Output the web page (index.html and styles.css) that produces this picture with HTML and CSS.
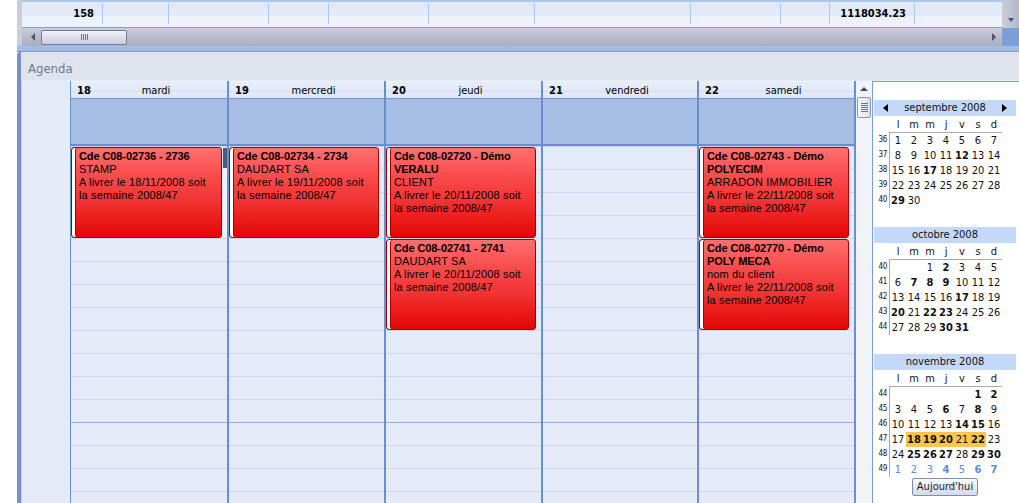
FILE: index.html
```html
<!DOCTYPE html>
<html lang="fr">
<head>
    <meta charset="UTF-8">
    <title>Agenda</title>
    <link rel="stylesheet" href="styles.css">
</head>
<body>
<div class="window">
    <!-- grille des commandes : ligne de totaux + barres de défilement -->
    <div class="grid-pane">
        <div class="grid-main">
            <div class="total-row">
                <div class="cell">158</div>
                <div class="cell"></div>
                <div class="cell"></div>
                <div class="cell"></div>
                <div class="cell"></div>
                <div class="cell"></div>
                <div class="cell"></div>
                <div class="cell"></div>
                <div class="cell"></div>
                <div class="cell">1118034.23</div>
                <div class="cell"></div>
            </div>
            <div class="hscroll">
                <span class="arr-left"></span>
                <div class="hthumb"><span class="hgrip"></span></div>
                <span class="arr-right"></span>
            </div>
        </div>
        <div class="grid-side">
            <div class="vtop"><span class="arr-down"></span></div>
            <div class="corner"></div>
        </div>
    </div>
    <div class="splitter"></div>

    <!-- agenda de la semaine -->
    <div class="agenda">
        <div class="agenda-title">Agenda</div>
        <div class="agenda-body">
            <div class="ruler"></div>
            <div class="days">
                <div class="day">
                    <div class="day-head"><b>18</b><span>mardi</span></div>
                    <div class="all-day"></div>
                    <div class="slots">
                        <div class="event r1">
                            <b>Cde C08-02736 - 2736</b>
                            <div>STAMP</div>
                            <div>A livrer le 18/11/2008 soit</div>
                            <div>la semaine 2008/47</div>
                        </div>
                        <div class="sel-bar"></div>
                    </div>
                </div>
                <div class="day">
                    <div class="day-head"><b>19</b><span>mercredi</span></div>
                    <div class="all-day"></div>
                    <div class="slots">
                        <div class="event r1">
                            <b>Cde C08-02734 - 2734</b>
                            <div>DAUDART SA</div>
                            <div>A livrer le 19/11/2008 soit</div>
                            <div>la semaine 2008/47</div>
                        </div>
                    </div>
                </div>
                <div class="day">
                    <div class="day-head"><b>20</b><span>jeudi</span></div>
                    <div class="all-day"></div>
                    <div class="slots">
                        <div class="event r1">
                            <b>Cde C08-02720 - Démo</b>
                            <b>VERALU</b>
                            <div>CLIENT</div>
                            <div>A livrer le 20/11/2008 soit</div>
                            <div>la semaine 2008/47</div>
                        </div>
                        <div class="event r5">
                            <b>Cde C08-02741 - 2741</b>
                            <div>DAUDART SA</div>
                            <div>A livrer le 20/11/2008 soit</div>
                            <div>la semaine 2008/47</div>
                        </div>
                    </div>
                </div>
                <div class="day">
                    <div class="day-head"><b>21</b><span>vendredi</span></div>
                    <div class="all-day"></div>
                    <div class="slots"></div>
                </div>
                <div class="day">
                    <div class="day-head"><b>22</b><span>samedi</span></div>
                    <div class="all-day"></div>
                    <div class="slots">
                        <div class="event r1">
                            <b>Cde C08-02743 - Démo</b>
                            <b>POLYECIM</b>
                            <div>ARRADON IMMOBILIER</div>
                            <div>A livrer le 22/11/2008 soit</div>
                            <div>la semaine 2008/47</div>
                        </div>
                        <div class="event r5">
                            <b>Cde C08-02770 - Démo</b>
                            <b>POLY MECA</b>
                            <div>nom du client</div>
                            <div>A livrer le 22/11/2008 soit</div>
                            <div>la semaine 2008/47</div>
                        </div>
                    </div>
                </div>
            </div>
            <div class="vbar">
                <span class="arr-up"></span>
                <div class="vthumb"><span class="vgrip"></span></div>
            </div>

            <!-- calendrier des trois mois -->
            <div class="minical">
                <div class="month">
                    <div class="month-head"><span class="prev"></span><span class="mtitle">septembre 2008</span><span class="next"></span></div>
                    <div class="dow"><span>l</span><span>m</span><span>m</span><span>j</span><span>v</span><span>s</span><span>d</span></div>
                    <div class="weeks">
                        <div class="wk"><span>36</span><span>37</span><span>38</span><span>39</span><span>40</span></div>
                        <div class="dates">
                            <span>1</span><span>2</span><span>3</span><span>4</span><span>5</span><span>6</span><span>7</span>
                            <span>8</span><span>9</span><span>10</span><span>11</span><span class="b">12</span><span>13</span><span>14</span>
                            <span>15</span><span>16</span><span class="b">17</span><span>18</span><span>19</span><span>20</span><span>21</span>
                            <span>22</span><span>23</span><span>24</span><span>25</span><span>26</span><span>27</span><span>28</span>
                            <span class="b">29</span><span>30</span>
                        </div>
                    </div>
                </div>
                <div class="month">
                    <div class="month-head"><span class="mtitle">octobre 2008</span></div>
                    <div class="dow"><span>l</span><span>m</span><span>m</span><span>j</span><span>v</span><span>s</span><span>d</span></div>
                    <div class="weeks">
                        <div class="wk"><span>40</span><span>41</span><span>42</span><span>43</span><span>44</span></div>
                        <div class="dates">
                            <span class="c3">1</span><span class="b">2</span><span>3</span><span>4</span><span>5</span>
                            <span>6</span><span class="b">7</span><span class="b">8</span><span class="b">9</span><span>10</span><span>11</span><span>12</span>
                            <span>13</span><span>14</span><span>15</span><span>16</span><span class="b">17</span><span>18</span><span>19</span>
                            <span class="b">20</span><span>21</span><span class="b">22</span><span class="b">23</span><span>24</span><span>25</span><span>26</span>
                            <span>27</span><span>28</span><span>29</span><span class="b">30</span><span class="b">31</span>
                        </div>
                    </div>
                </div>
                <div class="month last">
                    <div class="month-head"><span class="mtitle">novembre 2008</span></div>
                    <div class="dow"><span>l</span><span>m</span><span>m</span><span>j</span><span>v</span><span>s</span><span>d</span></div>
                    <div class="weeks">
                        <div class="wk"><span>44</span><span>45</span><span>46</span><span>47</span><span>48</span><span>49</span></div>
                        <div class="dates">
                            <span class="c6 b">1</span><span class="b">2</span>
                            <span>3</span><span>4</span><span>5</span><span class="b">6</span><span>7</span><span class="b">8</span><span>9</span>
                            <span>10</span><span>11</span><span>12</span><span>13</span><span class="b">14</span><span class="b">15</span><span>16</span>
                            <span>17</span><span class="hl b">18</span><span class="hl b">19</span><span class="hl b">20</span><span class="hl">21</span><span class="hl b">22</span><span>23</span>
                            <span>24</span><span class="b">25</span><span class="b">26</span><span class="b">27</span><span>28</span><span class="b">29</span><span class="b">30</span>
                            <span class="nx">1</span><span class="nx">2</span><span class="nx">3</span><span class="nx b">4</span><span class="nx">5</span><span class="nx b">6</span><span class="nx b">7</span>
                        </div>
                    </div>
                </div>
                <button class="today">Aujourd'hui</button>
            </div>
        </div>
    </div>
</div>
</body>
</html>
```

FILE: styles.css
```css
*{
    margin: 0;
    padding: 0;
    box-sizing: border-box;
}
html, body{
    overflow: hidden;
}
body{
    width: 1019px;
    height: 503px;
    background: #fff;
    font: 11px "DejaVu Sans Condensed", "DejaVu Sans", sans-serif;
    color: #111;
}
.window{
    margin-left: 17px;
}

/* grille du haut */
.grid-pane{
    display: flex;
    height: 46px;
}
.grid-main{
    flex: 1;
    border-left: 5px solid #c9cdda;
}
.total-row{
    display: grid;
    grid-template-columns: 80px 66px 100px 60px 100px 106px 156px 90px 49px 85px 1fr;
    height: 28px;
    padding: 1px 0 3px;
    border-top: 2px solid #abc7f0;
    border-bottom: 1px solid #8a9ec4;
    background: linear-gradient(#e2e9f8 0, #e2e9f8 58%, #edf1fa 58%);
}
.cell{
    font-weight: bold;
    text-align: right;
    padding-right: 8px;
    line-height: 21px;
    color: #000;
}
.cell + .cell{
    border-left: 1px solid #a8c8ef;
}
.hscroll{
    display: flex;
    align-items: center;
    height: 18px;
    padding: 0 6px 0 9px;
    background: linear-gradient(#cbcedb, #b8bccb 45%, #aaaec0);
}
.arr-left{
    border-top: 4px solid transparent;
    border-bottom: 4px solid transparent;
    border-right: 4px solid #4a5472;
}
.arr-right{
    margin-left: auto;
    border-top: 4px solid transparent;
    border-bottom: 4px solid transparent;
    border-left: 4px solid #4a5472;
}
.hthumb{
    display: flex;
    align-items: center;
    justify-content: center;
    width: 86px;
    height: 15px;
    margin-left: 6px;
    border: 1px solid #737c96;
    border-radius: 2px;
    background: linear-gradient(#f1f2f6, #dcdfe8 50%, #cbcfda);
}
.hgrip{
    width: 7px;
    height: 6px;
    background: repeating-linear-gradient(to right, #6d758c 0 1px, transparent 1px 2px);
}
.grid-side{
    width: 17px;
}
.vtop{
    display: flex;
    justify-content: center;
    align-items: flex-end;
    height: 28px;
    padding-bottom: 6px;
    background: linear-gradient(to right, #cacedb, #b3b8c9);
}
.arr-down{
    border-left: 3px solid transparent;
    border-right: 3px solid transparent;
    border-top: 4px solid #4a5472;
}
.corner{
    height: 18px;
    background: #7c9ed8;
}
.splitter{
    height: 6px;
    background: #9fbbe9;
    border-bottom: 1px solid #8c98b2;
}

/* agenda */
.agenda{
    border-left: 4px solid #7291cd;
    border-top-left-radius: 3px;
}
.agenda-title{
    height: 28px;
    padding: 5px 0 0 7px;
    line-height: 23px;
    font-size: 13px;
    color: #6d7a8e;
    background: #dfe3ee;
}
.agenda-body{
    display: flex;
    height: 423px;
    padding-top: 1px;
    background: #e4eaf8;
}
.ruler{
    flex: none;
    width: 49px;
    border-left: 1px solid #c5cbe8;
}
.days{
    flex: none;
    display: grid;
    grid-template-columns: 157px 157px 157px 156px 157px;
    border-right: 2px solid #6a8fd0;
}
.day{
    display: flex;
    flex-direction: column;
    min-width: 0;
    border-left: 2px solid #6a8fd0;
}
.day:first-child{
    border-left-width: 1px;
}
.day-head{
    display: grid;
    grid-template-columns: 14px 1fr;
    height: 18px;
    padding: 2px 6px 0;
    line-height: 15px;
    border-bottom: 1px solid #7396d2;
    background: linear-gradient(#f3f6fd 0, #e7eefa 1px, #e2e9f8 55%, #cfdbf0 60%, #e4ebf8 68%, #dde5f6);
    color: #000;
}
.day-head span{
    text-align: center;
}
.all-day{
    height: 47px;
    background: #a6bee4;
    border-bottom: 2px solid #6a8fd0;
}
.slots{
    flex: 1;
    display: grid;
    grid-template-columns: 1fr;
    grid-template-rows: repeat(16, 23px);
    padding-right: 5px;
    background:
        linear-gradient(#8fb0dd, #8fb0dd) 0 276px / 100% 1px no-repeat,
        repeating-linear-gradient(#cdd6eb 0 1px, transparent 1px 23px);
}
.event{
    grid-column: 1;
    margin-top: 1px;
    padding: 2px 4px 0 7px;
    border: 1px solid #a10000;
    border-radius: 3px;
    background: linear-gradient(#ff6f6f, #f94d4d 30%, #f23333 60%, #ea1616 85%, #e30606);
    box-shadow: inset 3px 0 #fff, inset 4px 0 #a10000;
    font: 11px/13px "Liberation Sans", Arial, sans-serif;
    letter-spacing: 0.15px;
    color: #000;
    white-space: nowrap;
    overflow: hidden;
}
.event b{
    display: block;
    letter-spacing: -0.1px;
}
.r1{
    grid-row: 1 / span 4;
}
.r5{
    grid-row: 5 / span 4;
}
/* marque de l'élément sélectionné */
.sel-bar{
    grid-row: 1 / span 4;
    grid-column: 1;
    justify-self: end;
    width: 4px;
    margin: 2px -5px 1px 0;
    background: linear-gradient(#4b5877 0, #4b5877 20px, #eef1fa 20px);
}
.vbar{
    flex: none;
    display: flex;
    flex-direction: column;
    align-items: center;
    width: 16px;
    padding-top: 6px;
    background: #f2f3f7;
}
.arr-up{
    border-left: 4px solid transparent;
    border-right: 4px solid transparent;
    border-bottom: 4px solid #3f4a68;
}
.vthumb{
    display: flex;
    align-items: center;
    justify-content: center;
    width: 14px;
    height: 21px;
    margin-top: 6px;
    border: 1px solid #8c94ae;
    border-radius: 2px;
    background: linear-gradient(to right, #f6f7fa, #dde0e8);
}
.vgrip{
    width: 7px;
    height: 9px;
    background: repeating-linear-gradient(#6f7790 0 1px, transparent 1px 2px);
}

/* petit calendrier */
.minical{
    flex: 1;
    padding: 18px 3px 0 1px;
    background: #fff;
    border-left: 1px solid #7c9dd6;
    border-top: 1px solid #7c9dd6;
    color: #111;
}
.month{
    margin-bottom: 4px;
}
.month.last{
    margin-bottom: 1px;
}
.month-head{
    display: flex;
    align-items: center;
    height: 16px;
    padding: 0 9px;
    line-height: 16px;
    background: #c4d9f7;
}
.mtitle{
    flex: 1;
    text-align: center;
}
.prev{
    border-top: 4px solid transparent;
    border-bottom: 4px solid transparent;
    border-right: 5px solid #000;
}
.next{
    border-top: 4px solid transparent;
    border-bottom: 4px solid transparent;
    border-left: 5px solid #000;
}
.dow{
    display: grid;
    grid-template-columns: repeat(7, 16px);
    height: 16px;
    padding: 1px 0 0 16px;
    line-height: 15px;
    text-align: center;
}
.weeks{
    display: flex;
    height: 91px;
}
.wk{
    width: 15px;
    padding-top: 1px;
}
.wk span{
    display: block;
    height: 15px;
    padding-right: 2px;
    text-align: right;
    font-size: 8px;
    line-height: 14px;
    letter-spacing: -0.3px;
}
.dates{
    display: grid;
    grid-template-columns: repeat(7, 16px);
    grid-auto-rows: 15px;
    align-self: start;
    border-top: 1px solid #a9a9a9;
    border-left: 1px solid #a9a9a9;
    line-height: 15px;
    text-align: center;
}
.c3{
    grid-column-start: 3;
}
.c6{
    grid-column-start: 6;
}
.b{
    font-weight: bold;
}
.hl{
    background: #fbc54f;
}
.nx{
    color: #5b8bd2;
}
.today{
    display: block;
    width: 66px;
    height: 18px;
    margin: 0 auto;
    border: 1px solid #7d8db0;
    border-radius: 2px;
    background: linear-gradient(#fbfcfe, #e4e9f3 50%, #d3dbeb);
    font: 11px/16px "DejaVu Sans Condensed", "DejaVu Sans", sans-serif;
    color: #1b1b1b;
}
```
